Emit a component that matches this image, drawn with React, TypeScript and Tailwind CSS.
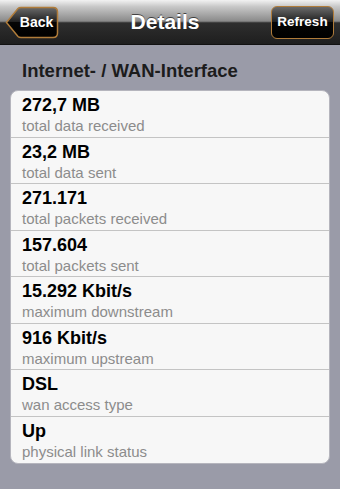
import React from "react";

const rows: [string, string][] = [
  ["272,7 MB", "total data received"],
  ["23,2 MB", "total data sent"],
  ["271.171", "total packets received"],
  ["157.604", "total packets sent"],
  ["15.292 Kbit/s", "maximum downstream"],
  ["916 Kbit/s", "maximum upstream"],
  ["DSL", "wan access type"],
  ["Up", "physical link status"],
];

function BackButton() {
  return (
    <div className="relative h-[33px] w-[54px]">
      <svg width="54" height="33" viewBox="0 0 54 33" className="absolute inset-0">
        <defs>
          <linearGradient id="bg1" x1="0" y1="0" x2="0" y2="1">
            <stop offset="0" stopColor="#6a6a6a" />
            <stop offset="0.5" stopColor="#1c1c1c" />
            <stop offset="0.5" stopColor="#050505" />
            <stop offset="1" stopColor="#000" />
          </linearGradient>
        </defs>
        <path d="M1.5 16.5 L13 2.5 Q14 1.5 16 1.5 L48 1.5 Q52.5 1.5 52.5 6 L52.5 27 Q52.5 31.5 48 31.5 L16 31.5 Q14 31.5 13 30.5 Z" fill="url(#bg1)" stroke="#b07c3a" strokeWidth="1.5" />
      </svg>
      <span className="absolute inset-0 flex items-center justify-center pl-[9px] text-[14px] font-bold text-white" style={{ fontFamily: "'Liberation Sans', Arial, sans-serif" }}>Back</span>
    </div>
  );
}

function RefreshButton() {
  return (
    <div className="h-[33px] w-[63px] rounded-[6px] border-[1.5px] border-[#b07c3a] bg-[linear-gradient(#6a6a6a,#1c1c1c_50%,#050505_50%,#000)] flex items-center justify-center text-[13.5px] font-bold text-white" style={{ fontFamily: "'Liberation Sans', Arial, sans-serif" }}>
      Refresh
    </div>
  );
}

export default function App() {
  return (
    <div className="w-[340px] h-[489px] bg-[#9a9ba8] flex flex-col overflow-hidden" style={{ fontFamily: "'Liberation Sans', Arial, sans-serif" }}>
      <div className="h-[45px] shrink-0 flex items-center justify-between pl-[5px] pr-[6px] bg-[linear-gradient(#f2f2f2,#c8c8c8_15%,#8a8a8a_48%,#2e2e2e_52%,#1e1e1e_100%)] border-b border-[#111]">
        <BackButton />
        <div className="text-[21px] font-bold text-white [text-shadow:0_-1px_0_rgba(0,0,0,0.6)]">Details</div>
        <RefreshButton />
      </div>
      <div className="px-[22px] pt-[15px] pb-[9px] text-[18.5px] font-bold text-[#1c1c1c] leading-[21px]">Internet- / WAN-Interface</div>
      <div className="mx-[10px] rounded-[8px] bg-[#f7f7f7] border border-[#b5b5bd] overflow-hidden">
        {rows.map(([v, l], i) => (
          <div key={i} className={`h-[46.5px] px-[11px] pt-[3px] ${i < rows.length - 1 ? "border-b border-[#c4c4c4]" : ""}`}>
            <div className="text-[18px] font-bold text-black leading-[22px]">{v}</div>
            <div className="text-[15px] text-[#8c8c8c] leading-[19px]">{l}</div>
          </div>
        ))}
      </div>
    </div>
  );
}
